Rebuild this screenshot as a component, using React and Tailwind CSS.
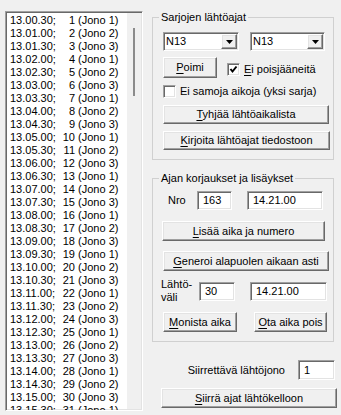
const sunken = "border border-t-[#a0a0a0] border-l-[#a0a0a0] border-r-white border-b-white shadow-[inset_1px_1px_0_#696969,inset_-1px_-1px_0_#e3e3e3]"
const raised = "border border-t-white border-l-white border-r-[#696969] border-b-[#696969] shadow-[inset_-1px_-1px_0_#a0a0a0,inset_1px_1px_0_#e3e3e3] bg-[#f0f0f0]"

const rows = Array.from({ length: 31 }, (_, i) => {
    const t = 13 * 3600 + 30 + i * 30
    const h = Math.floor(t / 3600)
    const m = String(Math.floor((t % 3600) / 60)).padStart(2, "0")
    const s = String(t % 60).padStart(2, "0")
    return { time: `${h}.${m}.${s};`, nro: i + 1, jono: (i % 3) + 1 }
})

const Btn = ({ className, children }) => (
    <div className={`${raised} flex items-center justify-center ${className}`}>{children}</div>
)

const Acc = ({ k, rest }) => (
    <span><span className="underline underline-offset-[2px]">{k}</span>{rest}</span>
)

const Combo = ({ className }) => (
    <div className={`${sunken} bg-white p-[1px] flex ${className}`}>
        <span className="flex-1 pl-[1px] leading-[15px]">N13</span>
        <div className={`${raised} w-[16px] flex items-center justify-center`}>
            <svg width="7" height="4" viewBox="0 0 7 4"><polygon points="0,0 7,0 3.5,4" fill="#000" /></svg>
        </div>
    </div>
)

const Edit = ({ className, value }) => (
    <div className={`${sunken} bg-white flex items-center pl-[5px] ${className}`}>{value}</div>
)

const Check = ({ checked }) => (
    <div className={`${sunken} bg-white w-[13px] h-[13px] flex items-center justify-center shrink-0`}>
        {checked &&
            <svg width="9" height="9" viewBox="0 0 9 9">
                <polyline points="1.5,4 3.5,6.5 7.5,1.5" fill="none" stroke="#000" strokeWidth="2" />
            </svg>
        }
    </div>
)

export default function App() {
    return (
        <div className="w-[341px] h-[415px] bg-[#f0f0f0] flex overflow-hidden text-[11px] leading-[13px] text-black font-['Liberation_Sans',Arial,sans-serif]">
            <div className="pl-[5px] pt-[11px] shrink-0">
                <div className={`${sunken} bg-white w-[138px] h-[400px] p-[1px] flex overflow-hidden`}>
                    <div className="w-[120px] flex flex-col pt-[1px]">
                        {rows.map(r => (
                            <div key={r.nro} className="h-[13px] flex whitespace-nowrap pl-[3px]">
                                <span className="w-[50px]">{r.time}</span>
                                <span className="w-[15px] text-right">{r.nro}</span>
                                <span>&nbsp;(Jono {r.jono})</span>
                            </div>
                        ))}
                    </div>
                    <div className="flex-1 bg-[#f0f0f0] flex justify-center pt-[15px]">
                        <div className="w-[2px] h-[68px] bg-[#8b8b8b]" />
                    </div>
                </div>
            </div>

            <div className="ml-[9px] flex flex-col pt-[11px] flex-1">
                <fieldset className="w-[182px] border border-[#d0d0d0]">
                    <legend className="ml-[6px] px-[2px] leading-[13px]">Sarjojen lähtöajat</legend>
                    <div className="flex flex-col pl-[10px] pt-[8px] pb-[9px]">
                        <div className="flex gap-[11px]">
                            <Combo className="w-[76px] h-[19px]" />
                            <Combo className="w-[75px] h-[19px]" />
                        </div>
                        <div className="flex items-start mt-[6px]">
                            <Btn className="w-[54px] h-[21px]"><Acc k="P" rest="oimi" /></Btn>
                            <div className="flex items-center ml-[10px] mt-[6px]">
                                <Check checked />
                                <span className="ml-[4px]"><Acc k="E" rest="i poisjääneitä" /></span>
                            </div>
                        </div>
                        <div className="flex items-center mt-[7px]">
                            <Check />
                            <span className="ml-[4px]">Ei samoja aikoja (yksi sarja)</span>
                        </div>
                        <Btn className="w-[166px] h-[19px] mt-[7px]"><Acc k="T" rest="yhjää lähtöaikalista" /></Btn>
                        <Btn className="w-[167px] h-[19px] mt-[7px]"><Acc k="K" rest="irjoita lähtöajat tiedostoon" /></Btn>
                    </div>
                </fieldset>

                <fieldset className="w-[182px] border border-[#d0d0d0] mt-[12px]">
                    <legend className="ml-[6px] px-[2px] leading-[13px]">Ajan korjaukset ja lisäykset</legend>
                    <div className="flex flex-col pl-[8px] pt-[6px] pb-[9px]">
                        <div className="flex items-center">
                            <span className="ml-[7px] w-[29px]">Nro</span>
                            <Edit className="w-[35px] h-[19px]" value="163" />
                            <Edit className="w-[76px] h-[19px] ml-[15px]" value="14.21.00" />
                        </div>
                        <Btn className="w-[163px] h-[20px] mt-[11px] ml-[1px]"><Acc k="L" rest="isää aika ja numero" /></Btn>
                        <Btn className="w-[166px] h-[20px] mt-[10px] ml-[2px]"><Acc k="G" rest="eneroi alapuolen aikaan asti" /></Btn>
                        <div className="flex items-center mt-[7px]">
                            <span className="w-[38px] flex flex-col">
                                <span>Lähtö-</span>
                                <span>väli</span>
                            </span>
                            <Edit className="w-[36px] h-[19px]" value="30" />
                            <Edit className="w-[77px] h-[19px] ml-[15px]" value="14.21.00" />
                        </div>
                        <div className="flex mt-[8px]">
                            <Btn className="w-[74px] h-[20px] ml-[2px]"><Acc k="M" rest="onista aika" /></Btn>
                            <Btn className="w-[73px] h-[20px] ml-[17px]"><Acc k="O" rest="ta aika pois" /></Btn>
                        </div>
                    </div>
                </fieldset>

                <div className="flex items-center justify-end pr-[6px] mt-[18px]">
                    <span className="mr-[13px]">Siirrettävä lähtöjono</span>
                    <Edit className="w-[37px] h-[20px]" value="1" />
                </div>
                <Btn className="w-[176px] h-[20px] mt-[8px] ml-[9px]"><Acc k="S" rest="iirrä ajat lähtökelloon" /></Btn>
            </div>
        </div>
    )
}
